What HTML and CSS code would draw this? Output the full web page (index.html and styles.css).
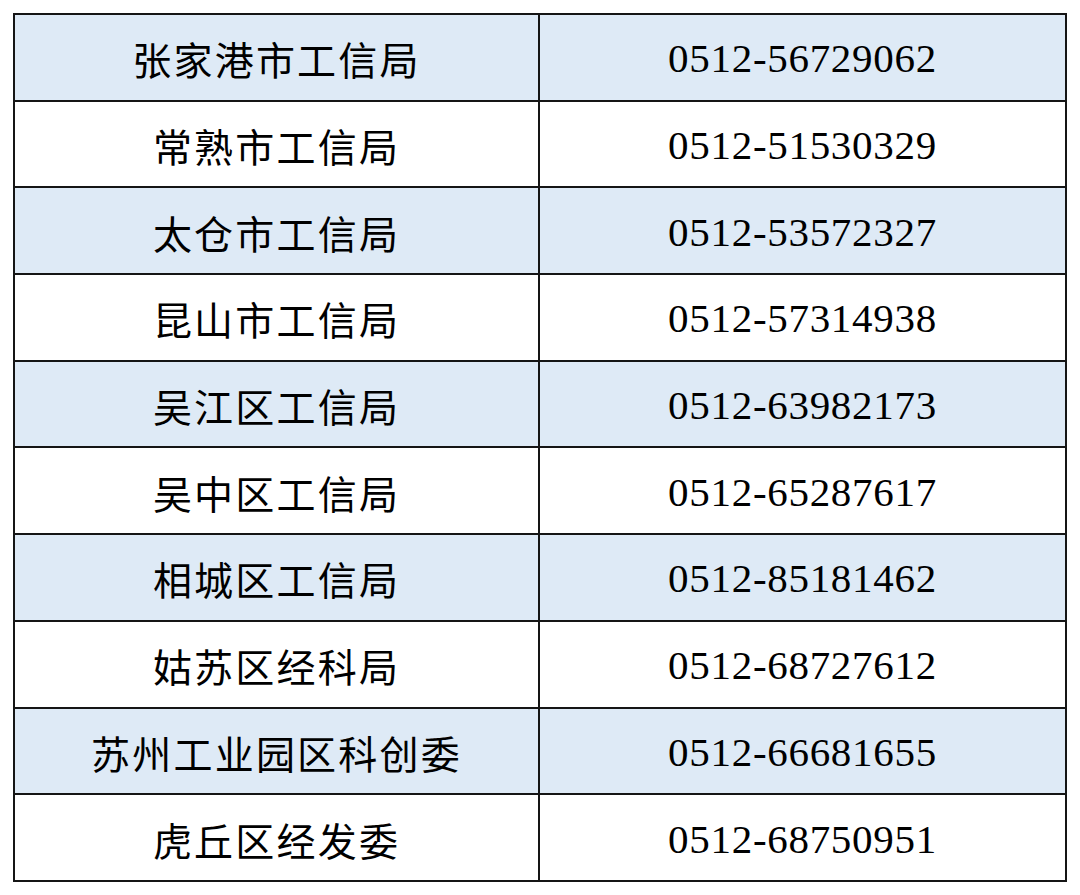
FILE: index.html
```html
<!DOCTYPE html>
<html lang="zh-CN">
<head>
<meta charset="utf-8">
<title>工信局联系电话</title>
<link rel="stylesheet" href="styles.css">
</head>
<body>
<table class="contacts">
  <tbody>
    <tr class="shade"><td class="name">张家港市工信局</td><td class="phone">0512-56729062</td></tr>
    <tr><td class="name">常熟市工信局</td><td class="phone">0512-51530329</td></tr>
    <tr class="shade"><td class="name">太仓市工信局</td><td class="phone">0512-53572327</td></tr>
    <tr><td class="name">昆山市工信局</td><td class="phone">0512-57314938</td></tr>
    <tr class="shade"><td class="name">吴江区工信局</td><td class="phone">0512-63982173</td></tr>
    <tr><td class="name">吴中区工信局</td><td class="phone">0512-65287617</td></tr>
    <tr class="shade"><td class="name">相城区工信局</td><td class="phone">0512-85181462</td></tr>
    <tr><td class="name">姑苏区经科局</td><td class="phone">0512-68727612</td></tr>
    <tr class="shade"><td class="name">苏州工业园区科创委</td><td class="phone">0512-66681655</td></tr>
    <tr><td class="name">虎丘区经发委</td><td class="phone">0512-68750951</td></tr>
  </tbody>
</table>
</body>
</html>
```

FILE: styles.css
```css
html, body {
  margin: 0;
  padding: 0;
  background: #ffffff;
}
body {
  padding: 13px 0 0 13px;
}
.contacts {
  border-collapse: collapse;
  width: 1054px;
  table-layout: fixed;
  border: 2px solid #151515;
  color: #000;
}
.contacts td {
  border: 2px solid #151515;
  height: 84.7px;
  padding: 3px 0 0 0;
  box-sizing: border-box;
  text-align: center;
  vertical-align: middle;
  line-height: 1;
}
.contacts tr {
  height: 86.7px;
}
.contacts .name {
  width: 525px;
  font-family: "Noto Sans CJK SC", sans-serif;
  font-size: 39px;
  letter-spacing: 2.2px;
  font-weight: 400;
}
.contacts .phone {
  font-family: "Liberation Serif", serif;
  font-size: 41px;
  letter-spacing: 0.7px;
}
.shade td {
  background: #deeaf6;
}
```
